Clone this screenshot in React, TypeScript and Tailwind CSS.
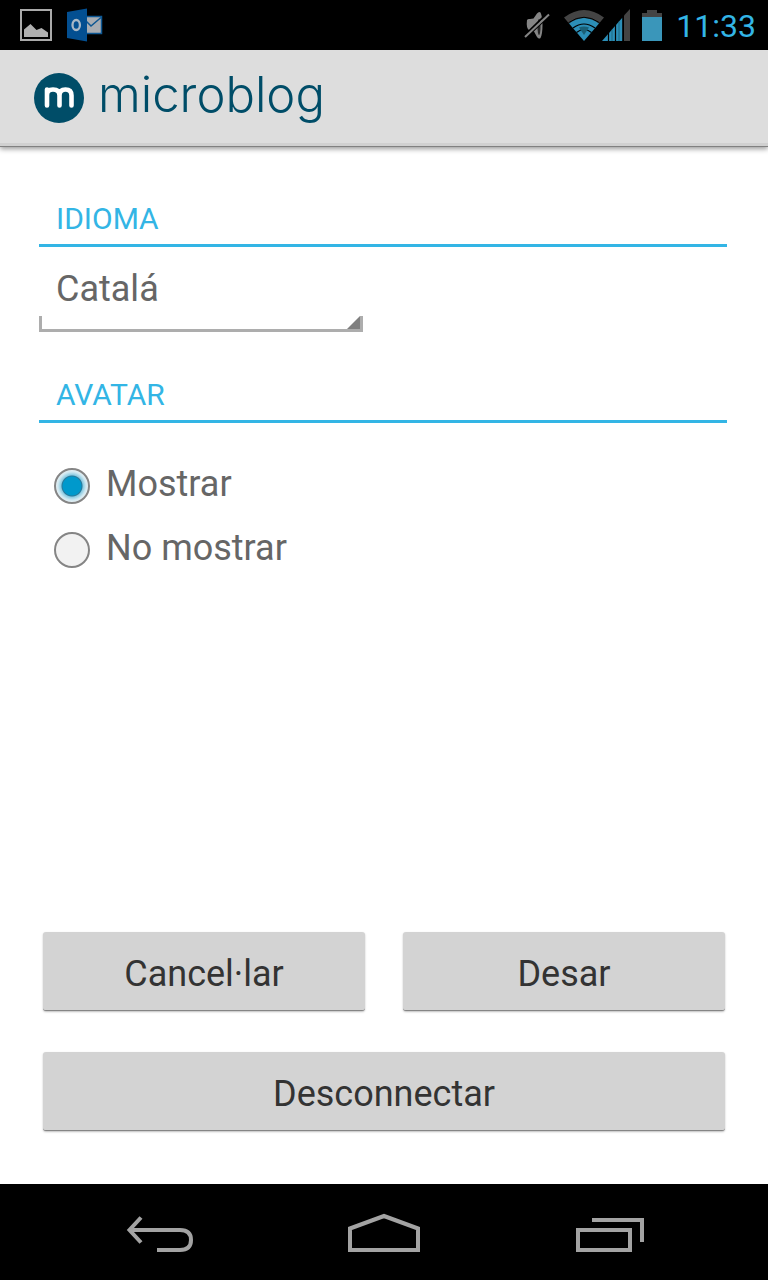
import { useState, type ReactNode } from "react";

function PictureIcon() {
  return (
    <svg width="32" height="32" viewBox="0 0 32 32" aria-hidden="true">
      <rect x="1" y="1" width="30" height="30" fill="none" stroke="#aaaaaa" strokeWidth="2" />
      <path d="M4 28V20.500L10.500 15L16.500 21L21.500 19L28 23.500V28Z" fill="#b0b0b0" />
    </svg>
  );
}

function OutlookIcon() {
  return (
    <svg width="36" height="34" viewBox="0 0 36 34" aria-hidden="true">
      <rect x="18" y="8.500" width="16.500" height="17" fill="#a9adb2" stroke="#0d5793" strokeWidth="1.500" />
      <path d="M19 13L24 18L34 9.500" fill="none" stroke="#0d5793" strokeWidth="1.500" />
      <path d="M0 4L20 0.500V33.500L0 30Z" fill="#034f91" />
      <ellipse cx="9.200" cy="17" rx="3.700" ry="5" fill="none" stroke="#a9b8c6" strokeWidth="2.300" />
    </svg>
  );
}

function MuteIcon() {
  return (
    <svg width="26" height="30" viewBox="0 0 26 30" aria-hidden="true">
      <path d="M3 10Q4 8.500 6 9L9.500 8.500L13 3.500Q15 1 16.500 2.500Q18.500 7 18.500 15Q18.500 24 16.500 28Q15 29.500 13 27L10 21.500L5 20Q2 18 3 10Z" fill="#858585" />
      <ellipse cx="15" cy="17" rx="1.500" ry="8" fill="#262626" />
      <path d="M1 25L24 2.500" stroke="#000" strokeWidth="1.800" />
      <path d="M2 28L25 6" stroke="#000" strokeWidth="1.500" />
      <path d="M1 27L25 4.500" stroke="#858585" strokeWidth="2" />
    </svg>
  );
}

function WifiIcon() {
  return (
    <svg width="40" height="31" viewBox="0 0 40 31" aria-hidden="true">
      <path d="M0 7.500Q20 -7.500 40 7.500L35 13.500Q20 2.500 5 13.500Z" fill="#444444" />
      <path d="M5 13.500Q20 2.500 35 13.500L20 31Z" fill="#2c8fb8" />
      <path d="M4.500 12.700Q20 1.800 35.500 12.700" fill="none" stroke="#000" strokeWidth="1" />
      <path d="M9 18Q20 10 31 18" fill="none" stroke="#000" strokeWidth="1.200" />
      <path d="M12.500 22.500Q20 16.500 27.500 22.500" fill="none" stroke="#000" strokeWidth="1.200" />
      <path d="M15 17.500Q20 15.500 25 17.500L20 25Z" fill="#1a6077" />
    </svg>
  );
}

function SignalIcon() {
  return (
    <svg width="28" height="32" viewBox="0 0 28 32" aria-hidden="true">
      <path d="M0 32L20.500 8.500V32Z" fill="#2c8fb8" />
      <path d="M22 6.500L28 0V32H22Z" fill="#444444" />
      <path d="M6.500 20V32M13.500 12V32M21 5V32" stroke="#000" strokeWidth="1.200" />
      <path d="M10 20.500V32M17 12.500V32" stroke="#1a6077" strokeWidth="0.800" />
    </svg>
  );
}

function BatteryIcon() {
  return (
    <svg width="20" height="31" viewBox="0 0 20 31" aria-hidden="true">
      <path d="M0 3H5V0H15V3H20V7H0Z" fill="#444444" />
      <path d="M0 7H20V31H0Z" fill="#3a96ba" />
    </svg>
  );
}

function StatusBar() {
  return (
    <div className="flex h-[50px] items-center justify-between bg-black pl-5 pr-3">
      <div className="flex items-center gap-[15px]">
        <PictureIcon />
        <OutlookIcon />
      </div>
      <div className="flex items-center">
        <MuteIcon />
        <div className="ml-3.5 flex items-end">
          <WifiIcon />
          <div className="-ml-0.5">
            <SignalIcon />
          </div>
        </div>
        <div className="ml-3">
          <BatteryIcon />
        </div>
        <time className="ml-3.5 pt-0.5 text-[32px] leading-[48px] text-[#33b5e5]">11:33</time>
      </div>
    </div>
  );
}

function Header() {
  return (
    <header className="flex h-[97px] items-center gap-3.5 border-b border-[#808080] bg-[#dddddd] pl-[34px] shadow-[inset_0_-3px_0_#d0d0d0,0_2px_5px_rgba(0,0,0,0.4)]">
      <svg width="50" height="50" viewBox="0 0 50 50" aria-hidden="true">
        <circle cx="25" cy="25" r="25" fill="#004d68" />
        <path
          d="M13 32.500V16.500M13 22Q13 16.500 19 16.500Q25.500 16.500 25.500 22.500V32.500M25.500 22.500Q25.500 16.500 31.500 16.500Q37.500 16.500 37.500 22.500V32.500"
          fill="none"
          stroke="#fff"
          strokeWidth="4.600"
          strokeLinecap="round"
          strokeLinejoin="round"
        />
      </svg>
      <h1 className="pb-1.5 font-[Inter,sans-serif] text-[49px] font-light leading-[56px] text-[#004d68]">microblog</h1>
    </header>
  );
}

const sectionTitle =
  "block w-full border-b-[3px] border-[#33b5e5] pl-[17px] pt-0.5 text-[30px] leading-[50px] text-[#33b5e5]";

function LanguageSection() {
  return (
    <section>
      <label htmlFor="language" className={sectionTitle}>
        IDIOMA
      </label>
      <div className="relative w-[324px] max-w-full">
        <select
          id="language"
          defaultValue="ca"
          className="block h-[85px] w-full appearance-none bg-transparent pb-0.5 pl-[17px] text-[36px] leading-[48px] text-[#666666] outline-none"
        >
          <option value="ca">Catalá</option>
          <option value="es">Español</option>
          <option value="en">English</option>
        </select>
        <div className="pointer-events-none absolute inset-x-0 bottom-0 flex h-4 justify-end border-x-[3px] border-b-[3px] border-[#adadad]">
          <svg width="13" height="13" viewBox="0 0 13 13" aria-hidden="true">
            <path d="M13 0V13H0Z" fill="#808080" />
          </svg>
        </div>
      </div>
    </section>
  );
}

function RadioOption({ value, checked, onSelect, children }: { value: string; checked: boolean; onSelect: (v: string) => void; children: ReactNode }) {
  return (
    <label className="flex h-16 items-center gap-4 text-[36px] leading-[48px] text-[#666666]">
      <input
        type="radio"
        name="avatar"
        value={value}
        checked={checked}
        onChange={() => onSelect(value)}
        className="size-9 shrink-0 appearance-none rounded-full border-2 border-[#858585] bg-[#f2f2f2] checked:bg-[radial-gradient(circle_at_center,#0099cc_0px,#0099cc_9px,#2a7797_10px,#8bcbe2_11px,#cfe8f1_14px,#eff3f5_17px)]"
      />
      <span className="pb-1">{children}</span>
    </label>
  );
}

function AvatarSection() {
  const [avatar, setAvatar] = useState("show");
  return (
    <fieldset>
      <legend className={sectionTitle}>AVATAR</legend>
      <div className="pl-[15px] pt-[31px]">
        <RadioOption value="show" checked={avatar === "show"} onSelect={setAvatar}>
          Mostrar
        </RadioOption>
        <RadioOption value="hide" checked={avatar === "hide"} onSelect={setAvatar}>
          No mostrar
        </RadioOption>
      </div>
    </fieldset>
  );
}

function ActionButton({ children }: { children: ReactNode }) {
  return (
    <button
      type="button"
      className="h-[79px] w-full rounded-[3px] border-b border-[#858585] bg-[#d3d3d3] pt-1.5 text-[36px] leading-[48px] text-[#333333] shadow-[0_1px_2px_rgba(0,0,0,0.25)]"
    >
      {children}
    </button>
  );
}

function NavigationBar() {
  return (
    <nav className="flex h-24 items-center justify-between bg-black px-[124px] pt-2.5">
      <button type="button" aria-label="Enrere">
        <svg width="72" height="48" viewBox="0 0 72 48" fill="none" stroke="#a3a3a3" strokeWidth="4" aria-hidden="true">
          <path d="M5 17H56Q67 17 67 27Q67 37 56 37H33" />
          <path d="M17 4.500L5.500 17L17 29.500" />
        </svg>
      </button>
      <button type="button" aria-label="Inici">
        <svg width="72" height="48" viewBox="0 0 72 48" fill="none" stroke="#a3a3a3" strokeWidth="4" aria-hidden="true">
          <path d="M2 15.500L36 3L70 15.500V37H2Z" />
        </svg>
      </button>
      <button type="button" aria-label="Aplicacions recents">
        <svg width="72" height="48" viewBox="0 0 72 48" fill="none" stroke="#a3a3a3" strokeWidth="4" aria-hidden="true">
          <path d="M6 17H58V37H6Z" />
          <path d="M20 7H70V29" />
        </svg>
      </button>
    </nav>
  );
}

export default function App() {
  return (
    <div className="flex min-h-screen flex-col bg-white font-[Roboto,sans-serif]">
      <StatusBar />
      <Header />
      <main className="flex grow flex-col px-[39px] pb-[53px] pt-[45px]">
        <form className="flex grow flex-col" onSubmit={(e) => e.preventDefault()}>
          <div className="flex flex-col gap-9 pr-0.5">
            <LanguageSection />
            <AvatarSection />
          </div>
          <div className="mt-auto grid grid-cols-2 gap-x-[38px] gap-y-[41px] px-1 pt-10">
            <ActionButton>Cancel·lar</ActionButton>
            <ActionButton>Desar</ActionButton>
            <div className="col-span-2">
              <ActionButton>Desconnectar</ActionButton>
            </div>
          </div>
        </form>
      </main>
      <NavigationBar />
    </div>
  );
}
